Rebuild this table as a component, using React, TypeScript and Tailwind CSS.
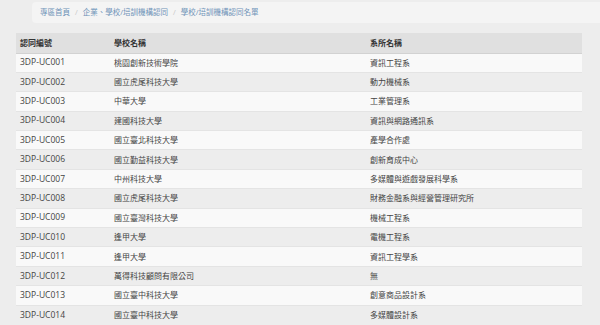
const rows: [string, string, string][] = [
  ["3DP-UC001", "桃園創新技術學院", "資訊工程系"],
  ["3DP-UC002", "國立虎尾科技大學", "動力機械系"],
  ["3DP-UC003", "中華大學", "工業管理系"],
  ["3DP-UC004", "建國科技大學", "資訊與網路通訊系"],
  ["3DP-UC005", "國立臺北科技大學", "產學合作處"],
  ["3DP-UC006", "國立勤益科技大學", "創新育成中心"],
  ["3DP-UC007", "中州科技大學", "多媒體與遊戲發展科學系"],
  ["3DP-UC008", "國立虎尾科技大學", "財務金融系與經營管理研究所"],
  ["3DP-UC009", "國立臺灣科技大學", "機械工程系"],
  ["3DP-UC010", "逢甲大學", "電機工程系"],
  ["3DP-UC011", "逢甲大學", "資訊工程學系"],
  ["3DP-UC012", "萬得科技顧問有限公司", "無"],
  ["3DP-UC013", "國立臺中科技大學", "創意商品設計系"],
  ["3DP-UC014", "國立臺中科技大學", "多媒體設計系"],
]

export default function App() {
  return (
    <div
      className="w-[600px] h-[325px] overflow-hidden bg-[#ededed] text-[8px]"
      style={{ fontFamily: '"Open Sans", "Noto Sans CJK TC", sans-serif' }}
    >
      <nav className="ml-[32px] mt-[2px] h-[21px] rounded-l bg-[#f4f4f4] flex items-center pl-[8px] text-[7.5px] text-[#6f93b8]">
        <span>專區首頁</span>
        <span className="mx-[5px] text-[#c8c8c8]">/</span>
        <span>企業、學校/培訓機構認同</span>
        <span className="mx-[5px] text-[#c8c8c8]">/</span>
        <span>學校/培訓機構認同名單</span>
      </nav>

      <table className="ml-[16px] mt-[10px] w-[566px] border-collapse table-fixed text-left">
        <colgroup>
          <col className="w-[98px]" />
          <col className="w-[256px]" />
          <col />
        </colgroup>
        <thead>
          <tr className="h-[20px] bg-[#e0e0e0] border-b border-[#d2d2d2] text-[#333]">
            <th className="pl-[4px] font-semibold">認同編號</th>
            <th className="font-semibold">學校名稱</th>
            <th className="font-semibold">系所名稱</th>
          </tr>
        </thead>
        <tbody className="text-[#444]">
          {rows.map(([id, school, dept], i) => (
            <tr
              key={id}
              className={`h-[19.4px] border-t border-[#e4e4e4] ${i % 2 === 0 ? "bg-[#f9f9f9]" : "bg-[#ededed]"}`}
            >
              <td className="pl-[4px] text-[8.5px]">{id}</td>
              <td>{school}</td>
              <td>{dept}</td>
            </tr>
          ))}
        </tbody>
      </table>
    </div>
  )
}
